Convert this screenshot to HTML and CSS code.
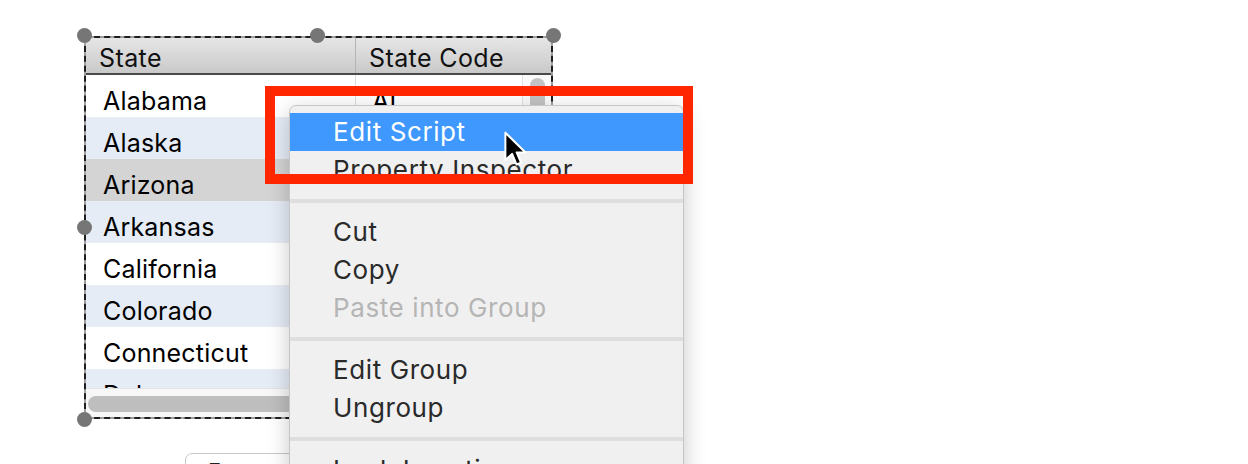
FILE: index.html
```html
<!DOCTYPE html>
<html>
<head>
<meta charset="utf-8">
<link rel="stylesheet" href="styles.css">
</head>
<body>
<div class="canvas">
  <div class="frame">
    <div class="grid">
      <div class="header">
        <div class="hcell c1">State</div>
        <div class="hcell c2">State Code</div>
      </div>
      <div class="gbody">
        <div class="rows">
          <div class="row"><span class="cell c1">Alabama</span><span class="cell c2">AL</span></div>
          <div class="row alt"><span class="cell c1">Alaska</span><span class="cell c2">AK</span></div>
          <div class="row sel"><span class="cell c1">Arizona</span><span class="cell c2">AZ</span></div>
          <div class="row alt"><span class="cell c1">Arkansas</span><span class="cell c2">AR</span></div>
          <div class="row"><span class="cell c1">California</span><span class="cell c2">CA</span></div>
          <div class="row alt"><span class="cell c1">Colorado</span><span class="cell c2">CO</span></div>
          <div class="row"><span class="cell c1">Connecticut</span><span class="cell c2">CT</span></div>
          <div class="row alt"><span class="cell c1">Delaware</span><span class="cell c2">DE</span></div>
        </div>
        <div class="vscroll"><div class="vthumb"></div></div>
      </div>
      <div class="hscroll"><div class="hthumb"></div></div>
    </div>
  </div>
  <div class="btn">Format</div>

  <span class="handle h-tl"></span>
  <span class="handle h-tm"></span>
  <span class="handle h-tr"></span>
  <span class="handle h-ml"></span>
  <span class="handle h-bl"></span>

  <div class="menu">
    <div class="item active">Edit Script</div>
    <div class="item">Property Inspector</div>
    <div class="sep"></div>
    <div class="item">Cut</div>
    <div class="item">Copy</div>
    <div class="item disabled">Paste into Group</div>
    <div class="sep"></div>
    <div class="item">Edit Group</div>
    <div class="item">Ungroup</div>
    <div class="sep"></div>
    <div class="item">Lock Location</div>
  </div>

  <div class="redbox"></div>

  <svg class="cursor" width="26" height="38" viewBox="0 0 22 34">
    <path d="M1.5 1.5 L1.5 26 L7.5 20.5 L11.5 30 L15.5 28.3 L11.6 19.2 L19.5 19.2 Z" fill="#000" stroke="#fff" stroke-width="1.8" stroke-linejoin="round"/>
  </svg>
</div>
</body>
</html>
```

FILE: styles.css
```css
* { box-sizing: border-box; }
html, body { margin: 0; padding: 0; background: #fff; }
body { font-family: Inter, "Liberation Sans", sans-serif; }

.canvas {
  position: relative;
  width: 1248px;
  height: 464px;
  overflow: hidden;
  padding: 36px 0 0 84px;
}

.frame {
  width: 469px;
  height: 383px;
  border: 2px dashed #1e1e1e;
  background: #a0a0a0;
}

.grid {
  width: 465px;
  height: 379px;
  background: #fff;
  display: flex;
  flex-direction: column;
  overflow: hidden;
}

.header {
  display: flex;
  height: 37px;
  flex: none;
  border-bottom: 2px solid #4a4a4a;
  background: linear-gradient(#e6e6e6, #c9c9c9);
}
.hcell {
  font-size: 25px;
  letter-spacing: 0.4px;
  color: #111;
  line-height: 29px;
  padding-top: 6px;
  white-space: nowrap;
}
.hcell.c1 { width: 270px; padding-left: 13px; border-right: 1px solid #b4b4b4; }
.hcell.c2 { flex: 1; padding-left: 13px; }

.gbody {
  display: flex;
  height: 313px;
  flex: none;
  overflow: hidden;
}
.rows { width: 436px; flex: none; }
.row {
  display: flex;
  height: 42px;
  background: #fff;
}
.row.alt { background: #e6ecf6; }
.row.sel { background: #d4d4d4; }
.cell {
  font-size: 25px;
  letter-spacing: 0.2px;
  color: #000;
  line-height: 34px;
  padding-top: 9px;
  white-space: nowrap;
}
.cell.c1 { width: 270px; padding-left: 17px; border-right: 1px solid #dcdcdc; }
.cell.c2 { flex: 1; padding-left: 16px; }

.vscroll {
  flex: 1;
  border-left: 1px solid #e2e2e2;
  background: #fafafa;
  padding: 3px 0 0 7px;
}
.vthumb {
  width: 15px;
  height: 170px;
  border-radius: 8px;
  background: #c3c3c3;
}

.hscroll {
  height: 29px;
  flex: none;
  border-top: 1px solid #e4e4e4;
  background: #f7f7f7;
  padding: 7px 0 0 2px;
}
.hthumb {
  width: 330px;
  height: 16px;
  border-radius: 8px;
  background: #bebebe;
}

.btn {
  margin: 34px 0 0 101px;
  width: 140px;
  height: 40px;
  border: 1px solid #c8c8c8;
  border-radius: 7px;
  background: #fff;
  font-size: 22px;
  color: #222;
  padding: 4px 0 0 22px;
}

.handle {
  position: absolute;
  width: 15px;
  height: 15px;
  border-radius: 50%;
  background: #767676;
}
.h-tl { left: 77px; top: 28px; }
.h-tm { left: 310px; top: 28px; }
.h-tr { left: 546px; top: 28px; }
.h-ml { left: 77px; top: 220px; }
.h-bl { left: 77px; top: 412px; }

.menu {
  position: absolute;
  left: 289px;
  top: 105px;
  width: 395px;
  height: 420px;
  background: #f0f0f0;
  border: 1px solid #c6c6c6;
  border-radius: 7px 7px 0 0;
  padding-top: 7px;
  box-shadow: 0 6px 22px rgba(0, 0, 0, 0.22);
}
.item {
  height: 38px;
  line-height: 38px;
  padding-left: 43px;
  font-size: 26px;
  letter-spacing: 0.6px;
  color: #2a2a2a;
  white-space: nowrap;
}
.item.active { background: #3e98fd; color: #fff; }
.item.disabled { color: #b5b5b5; }
.sep {
  height: 24px;
  padding-top: 10px;
}
.sep::before {
  content: "";
  display: block;
  height: 4px;
  background: #dedede;
}

.redbox {
  position: absolute;
  left: 265px;
  top: 86px;
  width: 428px;
  height: 98px;
  border: 10px solid #ff2600;
}

.cursor {
  position: absolute;
  left: 503px;
  top: 131px;
}
```
